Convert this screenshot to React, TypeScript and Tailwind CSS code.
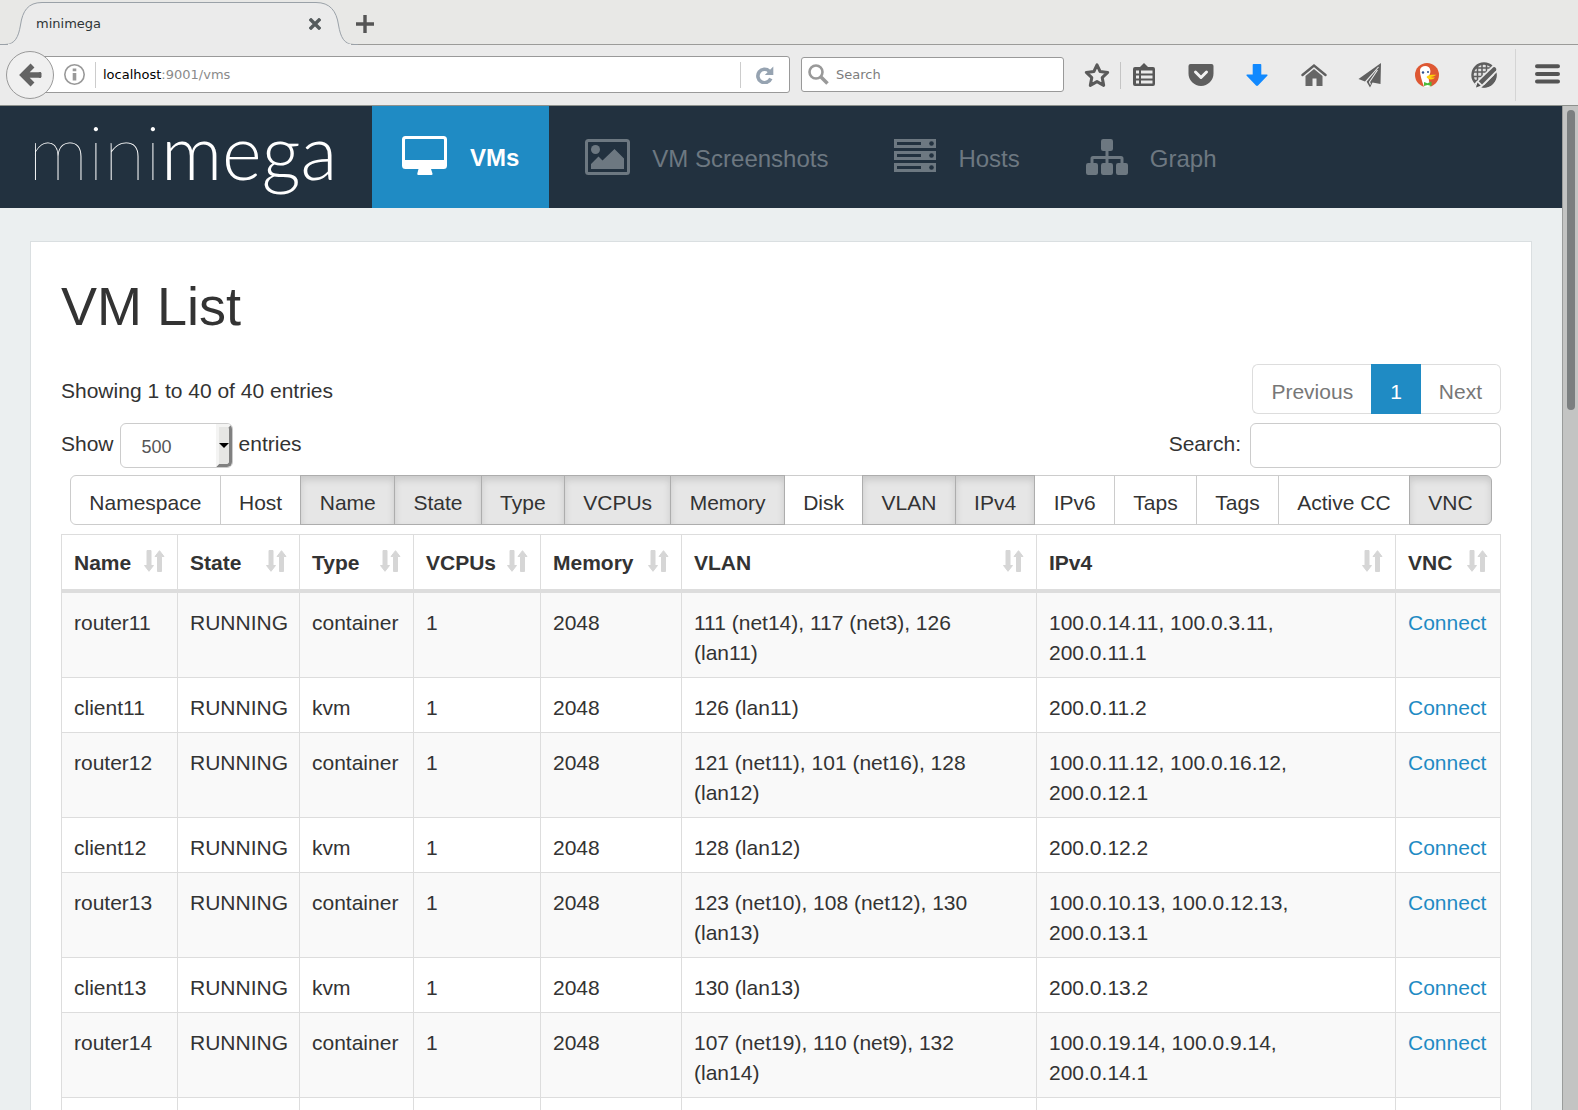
import React, { useState } from "react";

type Vm = { name: string; type: string; vlan: string; ip: string };

const vms: Vm[] = [
  { name: "router11", type: "container", vlan: "111 (net14), 117 (net3), 126 (lan11)", ip: "100.0.14.11, 100.0.3.11, 200.0.11.1" },
  { name: "client11", type: "kvm", vlan: "126 (lan11)", ip: "200.0.11.2" },
  { name: "router12", type: "container", vlan: "121 (net11), 101 (net16), 128 (lan12)", ip: "100.0.11.12, 100.0.16.12, 200.0.12.1" },
  { name: "client12", type: "kvm", vlan: "128 (lan12)", ip: "200.0.12.2" },
  { name: "router13", type: "container", vlan: "123 (net10), 108 (net12), 130 (lan13)", ip: "100.0.10.13, 100.0.12.13, 200.0.13.1" },
  { name: "client13", type: "kvm", vlan: "130 (lan13)", ip: "200.0.13.2" },
  { name: "router14", type: "container", vlan: "107 (net19), 110 (net9), 132 (lan14)", ip: "100.0.19.14, 100.0.9.14, 200.0.14.1" },
];

const toggles: [string, boolean][] = [
  ["Namespace", false],
  ["Host", false],
  ["Name", true],
  ["State", true],
  ["Type", true],
  ["VCPUs", true],
  ["Memory", true],
  ["Disk", false],
  ["VLAN", true],
  ["IPv4", true],
  ["IPv6", false],
  ["Taps", false],
  ["Tags", false],
  ["Active CC", false],
  ["VNC", true],
];

const columns: [string, string][] = [
  ["Name", "w-[116px]"],
  ["State", "w-[122px]"],
  ["Type", "w-[114px]"],
  ["VCPUs", "w-[127px]"],
  ["Memory", "w-[141px]"],
  ["VLAN", ""],
  ["IPv4", "w-[359px]"],
  ["VNC", "w-[105px]"],
];

/* ---------- browser chrome ---------- */

function TabStrip() {
  return (
    <div className="flex h-[45px] shrink-0 border-b border-[#9b9b99] bg-[#e8e8e6]">
      <div className="relative flex h-[45px] w-[358px] shrink-0 items-center justify-between pt-0.5 pr-[37px] pl-9">
        <svg className="absolute top-0 left-0" width="358" height="45" viewBox="0 0 358 45" aria-hidden="true">
          <path
            d="M0 44.5H5C15 44.5 18.500 37 20.500 25C22.500 11 28 2.500 42 2.500H316C330 2.500 336.500 11 338.500 25C340.500 37 344 44.500 354 44.500H358"
            fill="#ebebeb"
            stroke="#9aa1a8"
          />
          <path d="M8 44.500H351" stroke="#ebebeb" strokeWidth="1.500" />
        </svg>
        <span className="relative text-[13px] leading-5 text-[#2e3436]">minimega</span>
        <button type="button" aria-label="Close tab" className="relative">
          <svg width="12" height="12" viewBox="0 0 12 12" className="block">
            <path d="M2 2l8 8M10 2l-8 8" stroke="#555b5d" strokeWidth="3.400" strokeLinecap="square" />
          </svg>
        </button>
      </div>
      <button type="button" aria-label="New tab" className="-ml-0.5 h-[45px] pt-0.5">
        <svg width="18" height="18" viewBox="0 0 18 18" className="block">
          <path d="M9 0v18M0 9h18" stroke="#555555" strokeWidth="3.400" />
        </svg>
      </button>
    </div>
  );
}

function ToolIcon({ label, children }: { label: string; children: React.ReactNode }) {
  return (
    <button type="button" aria-label={label}>
      <svg width="26" height="26" viewBox="0 0 26 26" className="block">
        {children}
      </svg>
    </button>
  );
}

function Toolbar() {
  return (
    <div className="flex h-[61px] shrink-0 items-center border-b border-[#8d918d] bg-[#ebebeb] pr-[18px] pl-1.5">
      <button type="button" aria-label="Back" className="relative z-10">
        <svg width="48" height="48" viewBox="0 0 48 48" className="block">
          <circle cx="24" cy="24" r="23.500" fill="#f0f0f0" stroke="#999999" />
          <path d="M26.500 14.500L17 24l9.500 9.500M17.500 24H35" fill="none" stroke="#636363" strokeWidth="5.500" />
          <path d="M33 21.800h2v4.400h-2z" fill="#636363" stroke="#636363" strokeLinejoin="round" />
        </svg>
      </button>
      <div className="mb-px -ml-3 flex h-[37px] flex-1 items-center rounded-r-[3px] border border-[#999999] bg-white pl-[21px]">
        <svg width="21" height="21" viewBox="0 0 21 21" className="block shrink-0" aria-hidden="true">
          <circle cx="10.500" cy="10.500" r="9.700" fill="none" stroke="#999999" strokeWidth="1.600" />
          <path d="M8.700 4.500h3.600v2.800H8.700zM8.700 9h3.600v7.500H8.700z" fill="#999999" />
        </svg>
        <div className="ml-2.5 h-[26px] w-px bg-[#cccccc]" />
        <div className="ml-[7px] flex-1 text-[13px] leading-5">
          <span className="text-black">localhost</span>
          <span className="text-[#8a8a8a]">:9001/vms</span>
        </div>
        <div className="h-[26px] w-px bg-[#cccccc]" />
        <button type="button" aria-label="Reload" className="mx-[15px]">
          <svg width="18" height="18" viewBox="0 0 18 18" className="block">
            <path d="M13.300 5.200A6.700 6.700 0 1 0 14.800 12.500" fill="none" stroke="#96a3b1" strokeWidth="3.600" />
            <path d="M17.300 0.500V9H8.800z" fill="#96a3b1" />
          </svg>
        </button>
      </div>
      <label className="mb-px ml-[11px] flex h-[35px] w-[263px] items-center rounded-[3px] border border-[#999999] bg-white pl-1.5">
        <svg width="21" height="21" viewBox="0 0 21 21" className="block shrink-0" aria-hidden="true">
          <circle cx="8" cy="8" r="6.500" fill="none" stroke="#999999" strokeWidth="2.600" />
          <path d="M12.500 12.500l7 7" stroke="#999999" strokeWidth="3.600" />
        </svg>
        <input
          aria-label="Search the web"
          placeholder="Search"
          className="ml-[7px] w-full min-w-0 flex-1 bg-transparent text-[13px] outline-none placeholder:text-[#7d7d7d]"
        />
      </label>
      <button type="button" aria-label="Bookmark this page" className="ml-5">
        <svg width="26" height="26" viewBox="0 0 26 26" className="block">
          <path
            d="M13 2.800l3.100 6.700 7.600.900-5.500 5.200 1.500 7.800-6.700-3.800-6.700 3.800 1.500-7.800-5.500-5.200 7.600-.900z"
            fill="#ebebeb"
            stroke="#5a5a5a"
            strokeWidth="3"
            strokeLinejoin="round"
          />
        </svg>
      </button>
      <div className="ml-2.5 h-[27px] w-px bg-[#c4c4c4]" />
      <div className="ml-2.5 flex w-[366px] justify-between">
        <ToolIcon label="Bookmarks">
          <path d="M4 5h5l4-4 4 4h5a2 2 0 0 1 2 2v15a2 2 0 0 1-2 2H4a2 2 0 0 1-2-2V7a2 2 0 0 1 2-2z" fill="#575757" />
          <path d="M5 8.500h3v3H5zM5 13.500h3v3H5zM5 18.500h3v3H5zM10 8.500h11.500v3H10zM10 13.500h11.500v3H10zM10 18.500h11.500v3H10z" fill="#ebebeb" />
        </ToolIcon>
        <ToolIcon label="Pocket">
          <path d="M2.500 2h21a2 2 0 0 1 2 2v7.500a12.500 12.500 0 0 1-25 0V4a2 2 0 0 1 2-2z" fill="#5e5e5e" />
          <path d="M7.500 10l5.500 5.500L18.500 10" fill="none" stroke="#f2f2f2" strokeWidth="3" strokeLinecap="round" strokeLinejoin="round" />
        </ToolIcon>
        <ToolIcon label="Downloads">
          <path d="M9.500 2h7a.8.800 0 0 1 .8.800V12.500h5.700q1.200.3.300 1.300L14 23.500q-1 .8-2 0L2.700 13.800q-.9-1 .3-1.300h5.700V2.800a.8.800 0 0 1 .8-.8z" fill="#1189ff" />
        </ToolIcon>
        <ToolIcon label="Home">
          <path d="M1.500 13L13 3.500 24.500 13" fill="none" stroke="#5e5e5e" strokeWidth="2.400" strokeLinecap="round" />
          <path d="M13 7l8.500 7v10h-6v-7.500h-4V24h-7V14z" fill="#666666" />
        </ToolIcon>
        <ToolIcon label="Send">
          <path d="M23 1L0.500 17l6.500 2.500L21 4.500z" fill="#606060" />
          <path d="M23 1L8.500 19.500l3.500 6 2.500-5 8 1.500z" fill="#606060" />
          <path d="M20.500 5L8 19.500M19.500 8L11.500 20l1 2.500" fill="none" stroke="#ebebeb" strokeWidth="1.100" />
        </ToolIcon>
        <ToolIcon label="DuckDuckGo">
          <circle cx="13" cy="13" r="12" fill="#de5833" />
          <path d="M6 8c.5-4 6-5 8.500-3 2.500 2 2.500 6 .5 9-1 3 .5 6.500 1.500 10.500a12 12 0 0 1-6.500.2C8 19 5.800 13 6 8z" fill="#ffffff" />
          <circle cx="9" cy="10.500" r="1.200" fill="#2d4f8e" />
          <circle cx="14" cy="10" r="1" fill="#2d4f8e" />
          <path d="M12.500 15c2-2.500 5-2.300 10-2.200-2.500 1.700-4.500 1.900-6 2.200 1 .5 3 .5 4.500.5-2 2.700-7 2.500-8.500-.5z" fill="#fdd20a" />
          <path d="M10 20l3.500 1.200L17.500 19.500v4.500l-4-1L10 24z" fill="#4cba3c" />
        </ToolIcon>
        <ToolIcon label="Web tools">
          <circle cx="13" cy="13" r="11.500" fill="#e0e0e0" stroke="#5e5e5e" strokeWidth="2.400" />
          <path d="M2 10h20M2 14.500h12M5 6h15M3 18.500h7M6.500 4v16M11 2v15M15.500 1.500v11" stroke="#5e5e5e" strokeWidth="1.500" />
          <path d="M25.300 11L11 25.300a12.500 12.500 0 0 0 14.300-14.300z" fill="#5e5e5e" />
          <path d="M22.500 2.500L3.500 21.500l5.500 5.500L27 9z" fill="#ebebeb" />
          <path d="M22.300 5.200q1.500-.5 2.500.7 1 1.300.2 2.600L11 22.500l-3.300-3.300z" fill="#5e5e5e" />
          <path d="M6.500 20.500l3.200 3.200L5 25.500z" fill="#4f4f4f" />
        </ToolIcon>
      </div>
      <div className="ml-[18px] h-[52px] w-px bg-[#d4d4d4]" />
      <button type="button" aria-label="Open menu" className="ml-[19px] pb-0.5">
        <svg width="25" height="20" viewBox="0 0 25 20" className="block">
          <path d="M2 2.200h21M2 9.900h21M2 17.500h21" stroke="#545454" strokeWidth="4" strokeLinecap="round" />
        </svg>
      </button>
    </div>
  );
}

/* ---------- site header ---------- */

const DesktopIcon = (
  <svg width="45" height="39" viewBox="0 0 45 39" className="-mt-1 block shrink-0" aria-hidden="true">
    <path
      fillRule="evenodd"
      fill="currentColor"
      d="M3.500 0h38A3.500 3.500 0 0 1 45 3.500v26a3.500 3.500 0 0 1-3.500 3.500H29l1.500 4.500q.3 1.500-1.200 1.500H16.500q-1.500 0-1.200-1.500L16.500 33h-13A3.500 3.500 0 0 1 0 29.500v-26A3.500 3.500 0 0 1 3.500 0zM3 3.800V24h39V3.800q0-.8-.8-.8H3.800q-.8 0-.8.800z"
    />
  </svg>
);

const PictureIcon = (
  <svg width="45" height="36" viewBox="0 0 45 36" className="block shrink-0" aria-hidden="true">
    <rect x="1.500" y="1.500" width="42" height="33" rx="2" fill="none" stroke="currentColor" strokeWidth="3" />
    <circle cx="10.500" cy="10.500" r="4.500" fill="currentColor" />
    <path d="M6 30v-5l7.500-7.500 4 4L29.500 10 39 19.500V30z" fill="currentColor" />
  </svg>
);

const ServerIcon = (
  <svg width="42" height="33" viewBox="0 0 42 33" className="-mt-[3px] block shrink-0" aria-hidden="true">
    <path
      fillRule="evenodd"
      fill="currentColor"
      d="M0 0h42v9H0zM3 3v3h24V3zM0 12h42v9H0zM3 15v3h24v-3zM0 24h42v9H0zM3 27v3h24v-3z"
    />
    <g fill="#22313f">
      <circle cx="37.500" cy="4.500" r="2.300" />
      <circle cx="37.500" cy="16.500" r="2.300" />
      <circle cx="37.500" cy="28.500" r="2.300" />
    </g>
  </svg>
);

const SitemapIcon = (
  <svg width="42" height="36" viewBox="0 0 42 36" className="block shrink-0" aria-hidden="true">
    <g fill="currentColor">
      <rect x="0" y="24" width="12" height="12" rx="2.200" />
      <rect x="15" y="0" width="12" height="12" rx="2.200" />
      <rect x="15" y="24" width="12" height="12" rx="2.200" />
      <rect x="30" y="24" width="12" height="12" rx="2.200" />
    </g>
    <path d="M21 10v15M6 25v-5.500q0-1 1-1h28q1 0 1 1V25" fill="none" stroke="currentColor" strokeWidth="3" />
  </svg>
);

const navItems = [
  { label: "VM Screenshots", icon: PictureIcon },
  { label: "Hosts", icon: ServerIcon },
  { label: "Graph", icon: SitemapIcon },
];

function Header() {
  return (
    <header className="flex h-[102px] bg-[#22313f]">
      <a
        href="#home"
        className="flex w-[372px] shrink-0 items-center pb-3 pl-7 font-['Lato',sans-serif] text-[76px] leading-[90px] text-white"
      >
        <span className="font-extralight">mini</span>
        <span className="font-light">mega</span>
      </a>
      <nav className="flex gap-1.5 text-2xl">
        <a href="#vms" className="flex items-center gap-[23px] bg-[#1f8bc4] px-[30px] font-bold text-white">
          {DesktopIcon}
          <span className="pt-0.5">VMs</span>
        </a>
        {navItems.map((item) => (
          <a key={item.label} href={"#" + item.label} className="flex items-center gap-[22px] px-[30px] text-[#6d7881]">
            {item.icon}
            <span className="pt-1">{item.label}</span>
          </a>
        ))}
      </nav>
    </header>
  );
}

/* ---------- VM list ---------- */

function SortIcon() {
  return (
    <svg width="21" height="22" viewBox="0 0 21 22" className="-mt-1 block shrink-0" aria-hidden="true">
      <path
        d="M3 .500h4V15.500h2.500L5 21.300.500 15.500H3zM13.500 21.500h4V6.500H20L15.500.700 11 6.500h2.500z"
        fill="#d6d6d6"
        stroke="#d6d6d6"
        strokeLinejoin="round"
      />
    </svg>
  );
}

function ColumnToggles() {
  const [active, setActive] = useState(toggles.map(([, on]) => on));
  return (
    <div className="mx-[9px] mt-[7px] flex">
      {toggles.map(([label], i) => (
        <button
          key={label}
          type="button"
          aria-pressed={active[i]}
          onClick={() => setActive(active.map((on, j) => (i === j ? !on : on)))}
          className={
            "relative -ml-px flex-auto border px-3 pt-3 pb-1.5 whitespace-nowrap first:ml-0 first:rounded-l-md last:rounded-r-md " +
            (active[i]
              ? "z-10 border-[#adadad] bg-[#e6e6e6] shadow-[inset_0_4px_7px_rgba(0,0,0,0.125)]"
              : "border-[#cccccc] bg-white")
          }
        >
          {label}
        </button>
      ))}
    </div>
  );
}

function VmTable() {
  return (
    <table className="mt-[9px] w-full table-fixed border-separate border-spacing-0 border-t border-l border-[#dddddd]">
      <thead>
        <tr>
          {columns.map(([label, width]) => (
            <th key={label} className={"border-r border-b-4 border-[#dddddd] px-3 pt-[13px] pb-[11px] text-left " + width}>
              <button type="button" className="flex w-full items-center justify-between font-bold">
                {label}
                <SortIcon />
              </button>
            </th>
          ))}
        </tr>
      </thead>
      <tbody>
        {vms.map((vm) => (
          <tr
            key={vm.name}
            className="odd:bg-[#f9f9f9] [&>td]:border-r [&>td]:border-b [&>td]:border-[#dddddd] [&>td]:pt-[15px] [&>td]:pb-[9px] [&>td]:pl-3 [&>td]:align-top"
          >
            <td>{vm.name}</td>
            <td>RUNNING</td>
            <td>{vm.type}</td>
            <td>1</td>
            <td>2048</td>
            <td className="pr-10">{vm.vlan}</td>
            <td className="pr-10">{vm.ip}</td>
            <td>
              <a href={"#" + vm.name} className="text-[#1f8bc4]">
                Connect
              </a>
            </td>
          </tr>
        ))}
        <tr aria-hidden="true">
          {columns.map(([label]) => (
            <td key={label} className="h-[55px] border-r border-b border-[#dddddd]" />
          ))}
        </tr>
      </tbody>
    </table>
  );
}

function VmList() {
  return (
    <main className="mx-[30px] mt-[33px] border border-[#dadfe1] bg-white px-[30px] pt-[34px] pb-8 text-[21px] leading-[30px] text-[#333333]">
      <h1 className="mb-7 text-[54px] leading-[60px]">VM List</h1>
      <div className="flex items-start justify-between">
        <p className="pt-3">Showing 1 to 40 of 40 entries</p>
        <div className="flex text-[#777777]">
          <button type="button" className="rounded-l-md border border-r-0 border-[#dddddd] px-[18px] pt-3 pb-1.5">
            Previous
          </button>
          <button type="button" className="border border-[#1f8bc4] bg-[#1f8bc4] px-[18px] pt-3 pb-1.5 text-white">
            1
          </button>
          <button type="button" className="rounded-r-md border border-l-0 border-[#dddddd] px-[18px] pt-3 pb-1.5">
            Next
          </button>
        </div>
      </div>
      <div className="mt-[9px] flex justify-between">
        <label className="flex items-start">
          <span className="pt-1.5">Show</span>
          <span className="relative ml-1.5 block h-[45px] w-[113px]">
            <select
              defaultValue="500"
              className="h-full w-full appearance-none rounded-md border border-[#cccccc] bg-white pt-[3px] pl-[21px] text-lg text-[#555555]"
            >
              <option>10</option>
              <option>100</option>
              <option>500</option>
            </select>
            <span className="pointer-events-none absolute top-px right-px bottom-px flex w-4 items-center justify-center rounded-r-[5px] border-[3px] border-t-[#f4f4f3] border-r-[#808080] border-b-[#808080] border-l-[#f4f4f3] bg-[#e6e6e4]">
              <svg width="10" height="5" viewBox="0 0 10 5" className="block shrink-0" aria-hidden="true">
                <path d="M0 0h10L5 5z" fill="#000000" />
              </svg>
            </span>
          </span>
          <span className="pt-1.5 pl-1.5">entries</span>
        </label>
        <label className="flex items-start">
          <span className="pt-1.5">Search:</span>
          <input className="ml-[9px] h-[45px] w-[251px] rounded-md border border-[#cccccc] bg-white px-4 text-lg" />
        </label>
      </div>
      <ColumnToggles />
      <VmTable />
    </main>
  );
}

export default function App() {
  return (
    <div className="flex h-screen flex-col overflow-hidden font-['DejaVu_Sans',sans-serif]">
      <TabStrip />
      <Toolbar />
      <div className="flex min-h-0 flex-1 font-['Liberation_Sans',Arial,sans-serif]">
        <div className="min-w-0 flex-1 overflow-hidden bg-[#ebeff0]">
          <Header />
          <VmList />
        </div>
        <div className="w-4 shrink-0 border-l border-[#9a9c9b] bg-[#c3c4c3] pt-1">
          <div className="mx-auto h-[30%] w-2 rounded-full bg-[#7b7f80]" />
        </div>
      </div>
    </div>
  );
}
